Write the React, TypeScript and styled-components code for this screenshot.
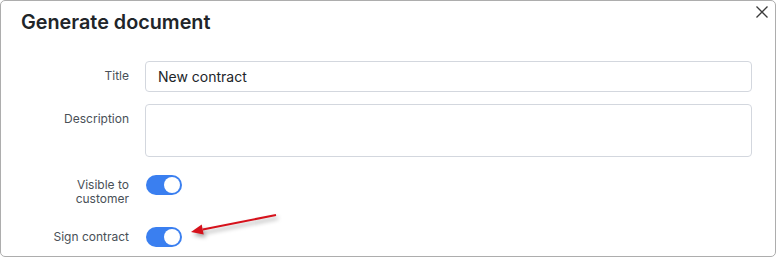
import React, { useState } from 'react'
import styled, { createGlobalStyle } from 'styled-components'

const GlobalStyle = createGlobalStyle`
  body {
    margin: 0;
    background: #fff;
    font-family: Inter, "Noto Sans", "Liberation Sans", sans-serif;
  }
`

const Dialog = styled.div`
  position: relative;
  box-sizing: border-box;
  width: 776px;
  height: 257px;
  border: 1px solid #adadad;
  border-radius: 5px;
  background: #fff;
  overflow: hidden;
`

const Header = styled.div`
  display: flex;
  justify-content: space-between;
  align-items: flex-start;
  height: 47px;
`

const Title = styled.h2`
  margin: 0;
  padding: 10px 0 0 20px;
  font-size: 19.8px;
  line-height: 22px;
  font-weight: 600;
  color: #212529;
`

const CloseButton = styled.button`
  display: flex;
  margin: 4px 6px 0 0;
  padding: 0;
  border: 0;
  background: none;
  cursor: pointer;
`

const Form = styled.div`
  display: flex;
  flex-direction: column;
  padding-top: 13px;
`

const Row = styled.div<{ $mt?: number }>`
  display: grid;
  grid-template-columns: 128px 1fr;
  column-gap: 16px;
  padding-right: 23px;
  margin-top: ${(p) => p.$mt ?? 0}px;
`

const Label = styled.label<{ $pt?: number }>`
  padding-top: ${(p) => p.$pt ?? 8}px;
  text-align: right;
  font-size: 12px;
  line-height: 14px;
  color: #495057;
`

const Input = styled.input`
  box-sizing: border-box;
  width: 100%;
  height: 31px;
  padding: 0 12px;
  border: 1px solid #d3d7de;
  border-radius: 4px;
  font-family: inherit;
  font-size: 14px;
  color: #212529;
  outline: none;
`

const TextArea = styled.textarea`
  box-sizing: border-box;
  width: 100%;
  height: 53px;
  padding: 6px 12px;
  border: 1px solid #d3d7de;
  border-radius: 4px;
  font-family: inherit;
  font-size: 14px;
  resize: none;
  outline: none;
`

const Track = styled.button<{ $on: boolean }>`
  position: relative;
  width: 36px;
  height: 20px;
  margin-left: 1px;
  padding: 0;
  border: 0;
  border-radius: 10px;
  background: ${(p) => (p.$on ? '#3a7ff0' : '#cfd4da')};
  cursor: pointer;
`

const Knob = styled.span<{ $on: boolean }>`
  position: absolute;
  top: 2px;
  left: ${(p) => (p.$on ? '18px' : '2px')};
  width: 16px;
  height: 16px;
  border-radius: 50%;
  background: #fff;
`

const Arrow = styled.svg`
  position: absolute;
  left: 179px;
  top: 204px;
  overflow: visible;
  filter: drop-shadow(2px 3px 2px rgba(0, 0, 0, 0.35));
`

const Toggle = ({ initial }: { initial: boolean }) => {
  const [on, setOn] = useState(initial)
  return (
    <Track $on={on} onClick={() => setOn(!on)}>
      <Knob $on={on} />
    </Track>
  )
}

const App = () => {
  return (
    <>
      <GlobalStyle />
      <Dialog>
        <Header>
          <Title>Generate document</Title>
          <CloseButton aria-label="Close">
            <svg width="14" height="14" viewBox="0 0 14 14">
              <path d="M1.5 1.5 L12.5 12.5 M12.5 1.5 L1.5 12.5" stroke="#3a3a3a" strokeWidth="1.3" />
            </svg>
          </CloseButton>
        </Header>
        <Form>
          <Row>
            <Label>Title</Label>
            <Input defaultValue="New contract" />
          </Row>
          <Row $mt={12}>
            <Label>Description</Label>
            <TextArea />
          </Row>
          <Row $mt={18}>
            <Label $pt={3}>
              Visible to
              <br />
              customer
            </Label>
            <div>
              <Toggle initial={true} />
            </div>
          </Row>
          <Row $mt={21}>
            <Label $pt={3}>Sign contract</Label>
            <div>
              <Toggle initial={true} />
            </div>
          </Row>
        </Form>
        <Arrow width="105" height="40" viewBox="0 0 105 40">
          <line x1="96" y1="10" x2="22.7" y2="24.5" stroke="#d6111b" strokeWidth="2" />
          <polygon points="11,27 23.7,29.4 21.7,19.6" fill="#d6111b" />
        </Arrow>
      </Dialog>
    </>
  )
}

export default App
